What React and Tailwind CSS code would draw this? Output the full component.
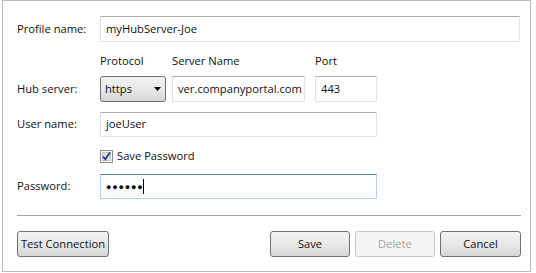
const font = { fontFamily: '"Open Sans", "Noto Sans", sans-serif' };

const TextBox = ({ className = '', value, focused }) => (
  <div
    className={`flex items-center h-full bg-white border pl-[5px] text-[11.2px] text-[#111] whitespace-nowrap overflow-hidden ${
      focused
        ? 'border-[#b7d0e6] border-t-[#557da0]'
        : 'border-[#e2e3ea] border-t-[#abadb3]'
    } ${className}`}
  >
    {value}
  </div>
);

const Button = ({ children, className = '', disabled }) => (
  <div
    className={`flex items-center justify-center h-full rounded-[3px] border text-[11.2px] whitespace-nowrap ${
      disabled
        ? 'border-[#c7c9cb] bg-[#f4f4f4] text-[#a3a3a3]'
        : 'border-[#707070] bg-gradient-to-b from-[#f3f3f3] via-[#e8e8e8] to-[#d6d6d6] text-[#111]'
    } ${className}`}
  >
    {children}
  </div>
);

const CheckBox = () => (
  <svg width="13" height="13" viewBox="0 0 13 13">
    <rect x="0.5" y="0.5" width="12" height="12" fill="#f4f4f4" stroke="#8e8f8f" />
    <rect x="2.5" y="2.5" width="8" height="8" fill="#e3e3e3" stroke="#c2c2c2" />
    <path d="M3 6.5 L5.3 9.2 L10 2.6" fill="none" stroke="#2e3a8c" strokeWidth="1.8" />
  </svg>
);

export default function App() {
  return (
    <div className="w-[536px] h-[273px] bg-white" style={font}>
      <div className="ml-[2px] w-[529px] h-[272px] border border-[#b9b9b9] pl-[14px] pt-[15px] text-[11.2px] text-[#111]">
        <div className="flex items-center h-[26px]">
          <div className="w-[83px]">Profile name:</div>
          <TextBox className="w-[420px]" value="myHubServer-Joe" />
        </div>

        <div className="flex items-center h-[16px] mt-[11px] pl-[83px]">
          <div className="w-[72px]">Protocol</div>
          <div className="w-[143px]">Server Name</div>
          <div>Port</div>
        </div>

        <div className="flex items-center h-[26px] mt-[7px]">
          <div className="w-[83px]">Hub server:</div>
          <div className="flex items-center justify-between w-[66px] h-full rounded-[3px] border border-[#707070] bg-gradient-to-b from-[#f3f3f3] via-[#e8e8e8] to-[#d6d6d6] pl-[4px] pr-[4px]">
            <span>https</span>
            <svg width="7" height="4" viewBox="0 0 7 4">
              <path d="M0 0 H7 L3.5 4 Z" fill="#000" />
            </svg>
          </div>
          <TextBox className="w-[133px] ml-[6px] pl-[2px]" value="ver.companyportal.com" />
          <TextBox className="w-[62px] ml-[10px]" value="443" />
        </div>

        <div className="flex items-center h-[25px] mt-[10px]">
          <div className="w-[83px]">User name:</div>
          <TextBox className="w-[277px]" value="joeUser" />
        </div>

        <div className="flex items-center h-[14px] mt-[12px] pl-[83px] gap-[4px]">
          <CheckBox />
          <span>Save Password</span>
        </div>

        <div className="flex items-center h-[25px] mt-[11px]">
          <div className="w-[83px]">Password:</div>
          <TextBox
            className="w-[277px]"
            focused
            value={
              <span className="flex items-center">
                <span className="text-[9px] tracking-[0.8px]">●●●●●●</span>
                <span className="w-px h-[15px] bg-black" />
              </span>
            }
          />
        </div>

        <div className="h-px w-[504px] bg-[#a0a0a0] mt-[16px]" />

        <div className="flex items-center h-[26px] mt-[15px] w-[504px]">
          <Button className="w-[92px]">Test Connection</Button>
          <div className="flex-1" />
          <Button className="w-[80px]">Save</Button>
          <Button className="w-[80px] ml-[5px]" disabled>
            Delete
          </Button>
          <Button className="w-[81px] ml-[5px]">Cancel</Button>
        </div>
      </div>
    </div>
  );
}
